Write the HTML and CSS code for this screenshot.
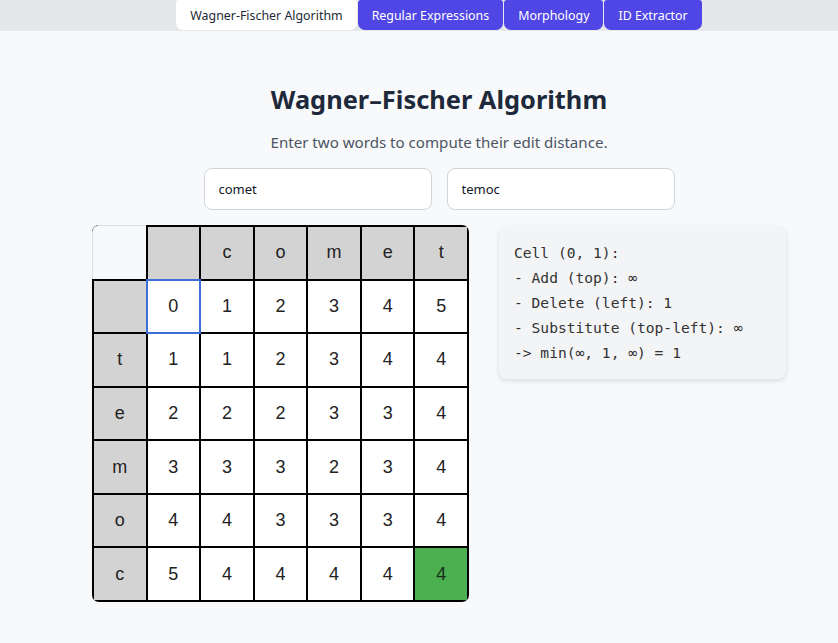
FILE: index.html
```html
<!DOCTYPE html>
<html>
<head>
<meta charset="utf-8">
<link rel="stylesheet" href="styles.css">
</head>
<body>
<nav class="nav">
  <a class="tab active">Wagner-Fischer Algorithm</a>
  <a class="tab">Regular Expressions</a>
  <a class="tab">Morphology</a>
  <a class="tab">ID Extractor</a>
</nav>
<main class="page">
  <h1 class="title">Wagner–Fischer Algorithm</h1>
  <p class="subtitle">Enter two words to compute their edit distance.</p>
  <div class="inputs">
    <input class="word" type="text" value="comet">
    <input class="word" type="text" value="temoc">
  </div>
  <div class="work">
    <div class="grid">
      <div class="cell corner"></div>
      <div class="cell head"></div>
      <div class="cell head">c</div>
      <div class="cell head">o</div>
      <div class="cell head">m</div>
      <div class="cell head">e</div>
      <div class="cell head">t</div>

      <div class="cell head"></div>
      <div class="cell sel">0</div>
      <div class="cell">1</div>
      <div class="cell">2</div>
      <div class="cell">3</div>
      <div class="cell">4</div>
      <div class="cell">5</div>

      <div class="cell head">t</div>
      <div class="cell">1</div>
      <div class="cell">1</div>
      <div class="cell">2</div>
      <div class="cell">3</div>
      <div class="cell">4</div>
      <div class="cell">4</div>

      <div class="cell head">e</div>
      <div class="cell">2</div>
      <div class="cell">2</div>
      <div class="cell">2</div>
      <div class="cell">3</div>
      <div class="cell">3</div>
      <div class="cell">4</div>

      <div class="cell head">m</div>
      <div class="cell">3</div>
      <div class="cell">3</div>
      <div class="cell">3</div>
      <div class="cell">2</div>
      <div class="cell">3</div>
      <div class="cell">4</div>

      <div class="cell head">o</div>
      <div class="cell">4</div>
      <div class="cell">4</div>
      <div class="cell">3</div>
      <div class="cell">3</div>
      <div class="cell">3</div>
      <div class="cell">4</div>

      <div class="cell head">c</div>
      <div class="cell">5</div>
      <div class="cell">4</div>
      <div class="cell">4</div>
      <div class="cell">4</div>
      <div class="cell">4</div>
      <div class="cell result">4</div>
    </div>
    <pre class="explain">Cell (0, 1):
- Add (top): ∞
- Delete (left): 1
- Substitute (top-left): ∞
-&gt; min(∞, 1, ∞) = 1</pre>
  </div>
</main>
</body>
</html>
```

FILE: styles.css
```css
* { box-sizing: border-box; }

html, body {
  margin: 0;
  padding: 0;
  background: #f8f9fa;
  font-family: "Noto Sans", "Open Sans", sans-serif;
  color: #1f2937;
}

.nav {
  height: 31px;
  background: #e5e7eb;
  display: flex;
  justify-content: center;
  gap: 1px;
  padding-left: 40px;
}

.tab {
  display: flex;
  align-items: center;
  height: 30px;
  padding: 0 14px;
  font-size: 12.4px;
  color: #ffffff;
  background: #4f46e5;
  border-radius: 3px 3px 7px 7px;
  text-decoration: none;
}

.tab.active {
  background: #ffffff;
  color: #1f2937;
}

.page {
  padding-left: 40px;
  display: flex;
  flex-direction: column;
  align-items: center;
}

.title {
  margin: 53px 0 0;
  font-size: 25.4px;
  line-height: 31px;
  font-weight: 700;
  color: #1e293b;
}

.subtitle {
  margin: 15px 0 0;
  font-size: 15.1px;
  line-height: 24px;
  color: #4b5563;
}

.inputs {
  margin-top: 14px;
  display: flex;
  gap: 15px;
}

.word {
  width: 228px;
  height: 42px;
  border: 1px solid #d1d5db;
  border-radius: 8px;
  background: #fff;
  padding: 0 14px;
  font-family: "Noto Sans", "Open Sans", sans-serif;
  font-size: 13px;
  color: #111827;
}

.work {
  margin-top: 15px;
  display: flex;
  align-items: flex-start;
  gap: 30px;
}

.grid {
  width: 377px;
  height: 377px;
  display: grid;
  grid-template-columns: repeat(7, 1fr);
  grid-template-rows: repeat(7, 1fr);
  gap: 2px;
  padding: 2px;
  background: #000;
  border-radius: 7px;
  overflow: hidden;
}

.cell {
  background: #fff;
  display: flex;
  align-items: center;
  justify-content: center;
  font-family: "Liberation Sans", Arial, sans-serif;
  font-size: 18px;
  color: #222;
}

.cell.head { background: #d3d3d3; }

.cell.corner {
  background: #f8f9fa;
  margin: -2px 0 0 -2px;
  border-top: 1px solid #dcdfe4;
  border-left: 1px solid #dcdfe4;
  border-top-left-radius: 7px;
}

.cell.sel {
  outline: 2px solid #3d6fd6;
  outline-offset: 0;
  position: relative;
  z-index: 1;
}

.cell.result {
  background: #4caf50;
  color: #1a2e1a;
}

.explain {
  margin: 1px 0 0;
  width: 287px;
  padding: 14px 15px;
  background: #f3f4f6;
  border-radius: 8px;
  box-shadow: 0 2px 5px rgba(0, 0, 0, 0.12);
  font-family: "DejaVu Sans Mono", monospace;
  font-size: 14.6px;
  line-height: 25px;
  color: #333;
  white-space: pre;
}
```
